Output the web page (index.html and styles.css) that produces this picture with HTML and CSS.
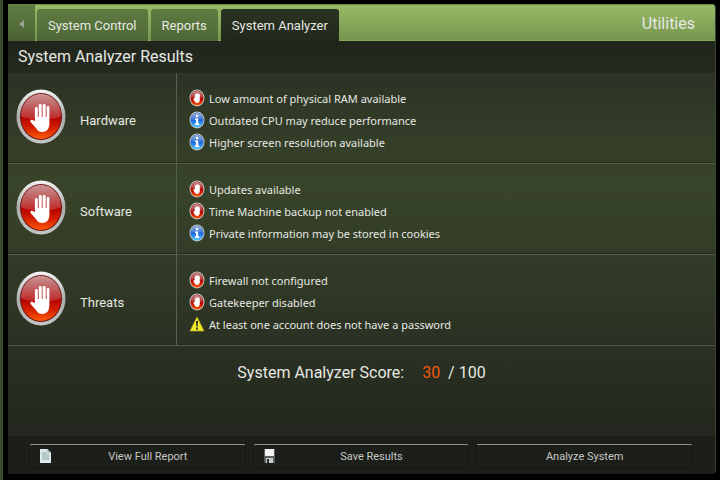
FILE: index.html
```html
<!DOCTYPE html>
<html lang="en">
<head>
    <meta charset="UTF-8">
    <meta name="viewport" content="width=device-width, initial-scale=1.0">
    <title>System Analyzer</title>
    <link rel="stylesheet" href="styles.css">
</head>
<body>
    <!-- Shared icons -->
    <svg class="defs" width="0" height="0" aria-hidden="true">
        <defs>
            <linearGradient id="rim" x1="0" y1="0" x2="0" y2="1">
                <stop offset="0" stop-color="#f4f4f4"/>
                <stop offset="0.5" stop-color="#a9abab"/>
                <stop offset="1" stop-color="#c4c6c6"/>
            </linearGradient>
            <linearGradient id="red" x1="0" y1="0" x2="0" y2="1">
                <stop offset="0" stop-color="#8c1010"/>
                <stop offset="0.5" stop-color="#b00000"/>
                <stop offset="0.75" stop-color="#d41f00"/>
                <stop offset="1" stop-color="#ff5a08"/>
            </linearGradient>
            <linearGradient id="gloss" x1="0" y1="0" x2="0" y2="1">
                <stop offset="0" stop-color="#fff" stop-opacity="0.55"/>
                <stop offset="1" stop-color="#fff" stop-opacity="0.15"/>
            </linearGradient>
            <linearGradient id="blue" x1="0" y1="0" x2="0" y2="1">
                <stop offset="0" stop-color="#1d50b4"/>
                <stop offset="0.5" stop-color="#1766dc"/>
                <stop offset="1" stop-color="#5cc8ff"/>
            </linearGradient>
        </defs>
        <symbol id="hand" viewBox="0 0 20 28">
            <path d="M4.600 17V4.600a1.400 1.400 0 0 1 2.800 0V13h.9V1.600a1.400 1.400 0 0 1 2.900 0V13h.9V1.600a1.400 1.400 0 0 1 2.900 0V13h.9V3.600a1.300 1.300 0 0 1 2.700 0V19.500c0 5-2.600 8.300-6.600 8.300-3.400 0-5-1.600-6.600-4.300L.6 18.300c-1.200-2 .8-3.200 2.200-2z"/>
        </symbol>
        <symbol id="stop" viewBox="0 0 50 56" preserveAspectRatio="none">
            <ellipse cx="25" cy="28" rx="24.5" ry="27.5" fill="url(#rim)"/>
            <ellipse cx="25" cy="28" rx="21" ry="24" fill="#6d1414"/>
            <ellipse cx="25" cy="28" rx="20" ry="23" fill="url(#red)"/>
            <path d="M5 28C5 14 14 5 25 5s20 9 20 23c-10 4-30 4-40 0z" fill="url(#gloss)"/>
            <use href="#hand" x="14" y="15" width="21" height="29" fill="#fff"/>
        </symbol>
        <symbol id="stop-small" viewBox="0 0 16 18">
            <ellipse cx="8" cy="9" rx="7.500" ry="8.500" fill="#c4cac6"/>
            <ellipse cx="8" cy="9" rx="6.500" ry="7.500" fill="url(#red)"/>
            <path d="M2 9c0-4 2.500-7 6-7s6 3 6 7z" fill="url(#gloss)"/>
            <path d="M5.800 9.500V5.500l1.200-.5 1.200-.8 1.400.6 1.200.8v5.200c0 2-1 3.200-2.600 3.200-1.500 0-2.400-.8-3.800-3.700-.4-.9.500-1.200 1.400-.8z" fill="#fff"/>
        </symbol>
        <symbol id="info" viewBox="0 0 16 18">
            <ellipse cx="8" cy="9" rx="7.500" ry="8.500" fill="#c4cac6"/>
            <ellipse cx="8" cy="9" rx="6.600" ry="7.500" fill="url(#blue)"/>
            <path d="M2 8.500C2 4.500 4.500 2 8 2s6 2.500 6 6.500z" fill="url(#gloss)"/>
            <rect x="7" y="4" width="2.200" height="2.200" fill="#fff"/>
            <path d="M6 7.500h3.200v5h1.100V14H5.900v-1.500H7V9H6z" fill="#fff"/>
        </symbol>
        <symbol id="warning" viewBox="0 0 16 18">
            <path d="M8 2l7 14H1z" fill="#f4ea2c" stroke="#b5a91d" stroke-width="0.800" stroke-linejoin="round"/>
            <path d="M7 6h2l-.4 5.500H7.400zM7.100 12.500h1.800v2H7.100z" fill="#222"/>
        </symbol>
    </svg>

    <div class="window">
        <header class="topbar">
            <button class="back" aria-label="Back">
                <svg viewBox="0 0 5 8"><path d="M5 0v8L0 4z"/></svg>
            </button>
            <nav class="tabs">
                <button class="tab">System Control</button>
                <button class="tab">Reports</button>
                <button class="tab active">System Analyzer</button>
            </nav>
            <span class="section-name">Utilities</span>
        </header>

        <h1>System Analyzer Results</h1>

        <main>
            <section class="group">
                <div class="summary">
                    <svg class="status"><use href="#stop"/></svg>
                    <h2>Hardware</h2>
                </div>
                <ul>
                    <li><svg><use href="#stop-small"/></svg>Low amount of physical RAM available</li>
                    <li><svg><use href="#info"/></svg>Outdated CPU may reduce performance</li>
                    <li><svg><use href="#info"/></svg>Higher screen resolution available</li>
                </ul>
            </section>
            <section class="group">
                <div class="summary">
                    <svg class="status"><use href="#stop"/></svg>
                    <h2>Software</h2>
                </div>
                <ul>
                    <li><svg><use href="#stop-small"/></svg>Updates available</li>
                    <li><svg><use href="#stop-small"/></svg>Time Machine backup not enabled</li>
                    <li><svg><use href="#info"/></svg>Private information may be stored in cookies</li>
                </ul>
            </section>
            <section class="group">
                <div class="summary">
                    <svg class="status"><use href="#stop"/></svg>
                    <h2>Threats</h2>
                </div>
                <ul>
                    <li><svg><use href="#stop-small"/></svg>Firewall not configured</li>
                    <li><svg><use href="#stop-small"/></svg>Gatekeeper disabled</li>
                    <li><svg><use href="#warning"/></svg>At least one account does not have a password</li>
                </ul>
            </section>
            <p class="score"><span>System Analyzer Score:</span> <span><b>30</b> / 100</span></p>
        </main>

        <footer>
            <button class="action">
                <svg viewBox="0 0 11 14">
                    <path d="M0 0h7.500L11 3.500V14H0z" fill="#dcebe9"/>
                    <path d="M2 3h5v2h2v6H2z" fill="#b4c9c7"/>
                    <path d="M7.500 0L11 3.500H7.500z" fill="#8fa5a3"/>
                </svg>
                <span>View Full Report</span>
            </button>
            <button class="action">
                <svg viewBox="0 0 11 14">
                    <path d="M0 0h11v14H1l-1-1z" fill="#5a5d5d"/>
                    <path d="M1 0h9v7H1z" fill="#f0f2f2"/>
                    <path d="M2 9h7v5H2z" fill="#c9cccc"/>
                    <path d="M3 10h2v4H3z" fill="#2a2c2c"/>
                </svg>
                <span>Save Results</span>
            </button>
            <button class="action">
                <span>Analyze System</span>
            </button>
        </footer>
    </div>
</body>
</html>
```
FILE: styles.css
```css
* {
    box-sizing: border-box;
}
body {
    margin: 0;
    min-height: 100vh;
    display: flex;
    padding: 4px 4px 6px 5px;
    border-left: 3px solid #3d4a30;
    background-color: #000;
    color: #e6e8e2;
    font-family: Roboto, sans-serif;
}
button {
    border: 0;
    padding: 0;
    color: inherit;
    font-family: inherit;
}
.defs {
    position: absolute;
}
.window {
    flex: 1;
    display: flex;
    flex-direction: column;
    border-right: 1px solid #39432f;
    border-radius: 0 4px 4px 0;
    overflow: hidden;
    background: linear-gradient(#2b3124 60px, #38442a 180px, #2b3123 340px, #23271f 432px);
}

/* Top bar */
.topbar {
    display: flex;
    height: 37px;
    background: linear-gradient(#98bb66, #76964f);
    border-top: 1px solid #68853f;
    border-bottom: 1px solid #86a75a;
}
.back {
    width: 27px;
    margin-bottom: -1px;
    background: linear-gradient(#5f7d42, #4a6233);
}
.back svg {
    width: 5px;
    height: 8px;
    fill: #9b9f98;
}
.tabs {
    display: flex;
    gap: 3px;
    padding: 4px 2px 0;
    margin-bottom: -1px;
}
.tab {
    padding: 0 11px;
    border-radius: 3px 3px 0 0;
    background: linear-gradient(#5e7b41, #4e6836);
    font-size: 13px;
}
.tab.active {
    background: linear-gradient(#2a3320, #22281c);
}
.section-name {
    margin-left: auto;
    padding-right: 20px;
    font-size: 16px;
    line-height: 38px;
}

h1 {
    margin: 0;
    padding-left: 10px;
    background: linear-gradient(#20251c, #252a21);
    font-size: 16px;
    font-weight: normal;
    line-height: 32px;
}

/* Result groups */
main {
    flex: 1;
}
.group {
    display: flex;
    border-bottom: 1px solid #525c49;
    box-shadow: inset 0 -1px #252c1e;
}
.summary {
    flex: 0 0 169px;
    display: flex;
    align-items: center;
    padding: 0 8px 4px;
    border-right: 1px solid #566050;
}
.status {
    width: 50px;
    height: 55px;
}
h2 {
    margin: 8px 0 0 14px;
    font-size: 13px;
    font-weight: normal;
}
ul {
    margin: 0;
    padding: 14px 0 10px 12px;
    list-style: none;
}
li {
    display: flex;
    align-items: center;
    gap: 4px;
    height: 22px;
    font-family: "Noto Sans", sans-serif;
    font-size: 11px;
}
li svg {
    width: 16px;
    height: 18px;
}
.score {
    display: flex;
    justify-content: center;
    gap: 18px;
    margin: 0;
    font-size: 16px;
    line-height: 54px;
}
.score b {
    margin-right: 4px;
    color: #f25a0c;
    font-weight: normal;
}

/* Bottom buttons */
footer {
    display: flex;
    gap: 7px;
    padding: 8px 22px 6px 21px;
    background-color: #1c1e19;
}
.action {
    flex: 1;
    display: flex;
    align-items: center;
    height: 24px;
    border: 1px solid #151713;
    border-top-color: #92958f;
    border-radius: 3px;
    background-color: #1c1e19;
    color: #c6c8c3;
    font-size: 11px;
}
.action svg {
    width: 11px;
    height: 14px;
    margin-left: 10px;
}
.action span {
    flex: 1;
}
```
